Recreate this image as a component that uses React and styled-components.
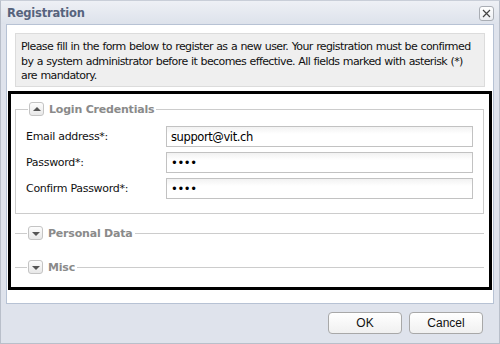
import styled, { createGlobalStyle } from "styled-components"

const Global = createGlobalStyle`
  * { box-sizing: border-box; }
  body {
    margin: 0;
    font-family: "DejaVu Sans", Verdana, sans-serif;
  }
`

const Window = styled.div`
  width: 500px;
  height: 344px;
  display: flex;
  flex-direction: column;
  background: #dfe3ec;
  border: 1px solid #b9bfca;
  border-top-color: #c9ced8;
`

const TitleBar = styled.div`
  height: 23px;
  display: flex;
  align-items: center;
  justify-content: space-between;
  padding: 0 5px 0 6px;
  background: linear-gradient(#eef0f5, #dde2eb);
`

const Title = styled.span`
  font-size: 11.5px;
  font-weight: bold;
  color: #56637d;
  letter-spacing: -0.2px;
`

const CloseButton = styled.button`
  width: 15px;
  height: 15px;
  padding: 0;
  margin-top: 2px;
  display: flex;
  align-items: center;
  justify-content: center;
  border: 1px solid #a9adb4;
  border-radius: 3px;
  background: linear-gradient(#ffffff, #eceef2);
`

const Body = styled.div`
  flex: 0 0 280px;
  margin: 0 5px 0 5px;
  background: #fff;
  border: 1px solid #b7c2d4;
  padding: 8px 1px 0 1px;
  display: flex;
  flex-direction: column;
`

const Info = styled.div`
  margin: 0 7px 0 7px;
  height: 54px;
  padding: 6px 5px;
  background: #efefef;
  border: 1px solid #dcdcdc;
  font-size: 11px;
  line-height: 14.5px;
  color: #111;
  letter-spacing: -0.6px;
  word-spacing: 0.5px;
`

const Highlight = styled.div`
  margin-top: 4px;
  height: 199px;
  border: 3px solid #000;
  padding: 8px 5px 0 4px;
`

const Fieldset = styled.fieldset`
  margin: 0;
  padding: ${(p) => (p.$open ? "10px 0 14px 0" : "0")};
  margin-top: ${(p) => p.$gap || 0}px;
  border: 1px solid #cccccc;
  ${(p) => !p.$open && "border-left: none; border-right: none; border-bottom: none;"}
  min-width: 0;
`

const Legend = styled.legend`
  margin-left: 12px;
  padding: 0 2px 0 1px;
  display: flex;
  align-items: center;
  gap: 5px;
  font-size: 11px;
  font-weight: bold;
  color: #8a8a8a;
  letter-spacing: -0.2px;
`

const Toggle = styled.span`
  width: 15px;
  height: 14px;
  display: flex;
  align-items: center;
  justify-content: center;
  border: 1px solid #c4c4c4;
  border-radius: 3px;
  background: linear-gradient(#fdfdfd, #e8e8e8);
`

const Arrow = styled.span`
  width: 0;
  height: 0;
  border-left: 4px solid transparent;
  border-right: 4px solid transparent;
  ${(p) =>
    p.$up
      ? "border-bottom: 4px solid #555; margin-top: -1px;"
      : "border-top: 4px solid #555; margin-top: 1px;"}
`

const Grid = styled.div`
  display: grid;
  grid-template-columns: 140px 1fr;
  row-gap: 5px;
  align-items: center;
  padding: 0 10px;
`

const Label = styled.label`
  font-size: 11px;
  color: #111;
  letter-spacing: -0.3px;
`

const Input = styled.input`
  height: 21px;
  width: 100%;
  border: 1px solid #c2c2c2;
  padding: 0 4px;
  font-family: "DejaVu Sans", Verdana, sans-serif;
  font-size: 11.5px;
  letter-spacing: -0.4px;
  color: #000;
  background: linear-gradient(#f2f2f2, #ffffff 7px);
  outline: none;
`

const Footer = styled.div`
  flex: 1;
  display: flex;
  justify-content: flex-end;
  align-items: center;
  gap: 7px;
  padding: 0 16px 2px 0;
`

const Button = styled.button`
  width: 74px;
  height: 22px;
  border: 1px solid #a8a8a8;
  border-radius: 4px;
  background: linear-gradient(#ffffff, #f0f0f0);
  font-family: "Liberation Sans", Arial, sans-serif;
  font-size: 12px;
  color: #111;
`

const Section = ({ title, open, gap, children }) => (
  <Fieldset $open={open} $gap={gap}>
    <Legend>
      <Toggle>
        <Arrow $up={open} />
      </Toggle>
      {title}
    </Legend>
    {children}
  </Fieldset>
)

const App = () => {
  return (
    <>
      <Global />
      <Window>
        <TitleBar>
          <Title>Registration</Title>
          <CloseButton>
            <svg width="9" height="9" viewBox="0 0 9 9">
              <path d="M1 1 L8 8 M8 1 L1 8" stroke="#444" strokeWidth="1.2" />
            </svg>
          </CloseButton>
        </TitleBar>
        <Body>
          <Info>
            Please fill in the form below to register as a new user. Your registration must be confirmed
            by a system administrator before it becomes effective. All fields marked with asterisk (*)
            are mandatory.
          </Info>
          <Highlight>
            <Section title="Login Credentials" open>
              <Grid>
                <Label>Email address*:</Label>
                <Input defaultValue="support@vit.ch" />
                <Label>Password*:</Label>
                <Input type="password" defaultValue="••••" />
                <Label>Confirm Password*:</Label>
                <Input type="password" defaultValue="••••" />
              </Grid>
            </Section>
            <Section title="Personal Data" gap={12} />
            <Section title="Misc" gap={20} />
          </Highlight>
        </Body>
        <Footer>
          <Button>OK</Button>
          <Button>Cancel</Button>
        </Footer>
      </Window>
    </>
  )
}

export default App
